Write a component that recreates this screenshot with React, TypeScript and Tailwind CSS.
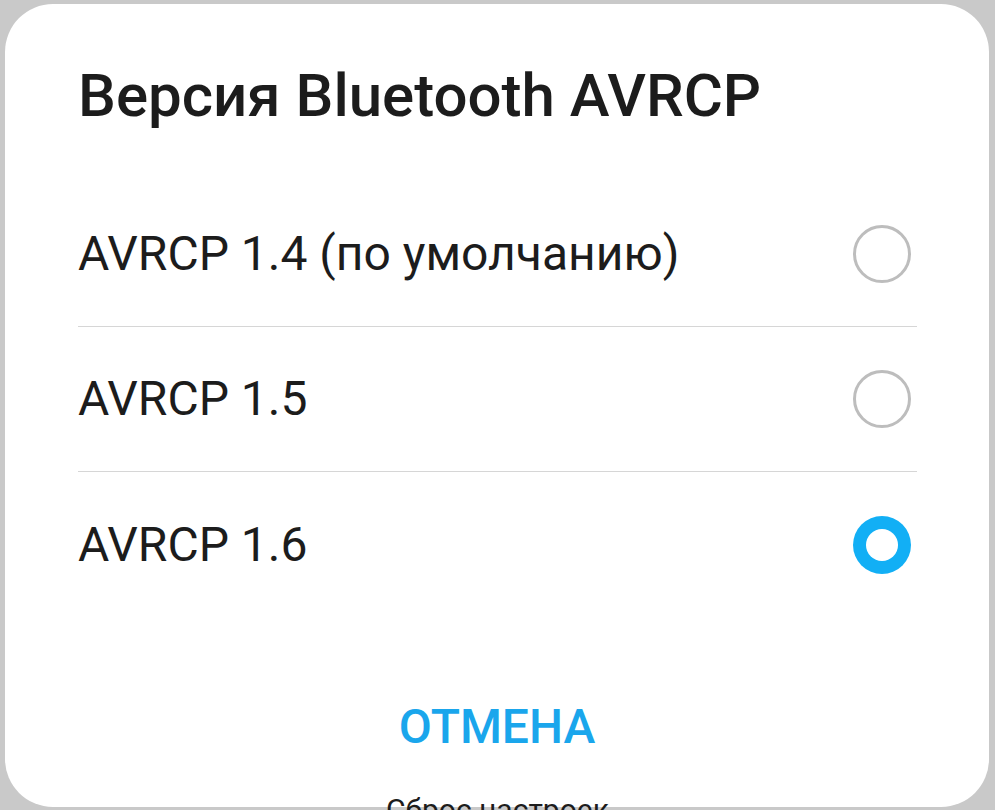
import React from "react";

const items = [
  { label: "AVRCP 1.4 (по умолчанию)", selected: false },
  { label: "AVRCP 1.5", selected: false },
  { label: "AVRCP 1.6", selected: true },
];

function Radio({ selected }: { selected: boolean }) {
  if (selected) {
    return (
      <div className="w-[58px] h-[58px] rounded-full bg-[#12aff5] flex items-center justify-center">
        <div className="w-[32px] h-[32px] rounded-full bg-white" />
      </div>
    );
  }
  return <div className="w-[58px] h-[58px] rounded-full border-[3px] border-[#bdbdbd]" />;
}

export default function App() {
  return (
    <div
      className="relative w-[995px] h-[810px] overflow-hidden bg-[#c9c9c9] pt-[4px] pl-[5px] pr-[6px]"
      style={{ fontFamily: "Roboto, 'Noto Sans', sans-serif" }}
    >
      <div className="h-[803px] bg-white rounded-[48px] flex flex-col">
        <div className="h-[178px] pl-[73px] pt-[62px]">
          <h1 className="text-[60px] leading-none font-medium text-[#1c1c1c]">
            Версия Bluetooth AVRCP
          </h1>
        </div>
        <div className="pl-[73px] pr-[72px]">
          {items.map((it, i) => (
            <div
              key={it.label}
              className={
                "h-[145px] flex items-center justify-between " +
                (i < items.length - 1 ? "border-b border-[#d6d6d6]" : "")
              }
            >
              <span className="text-[48px] leading-none text-[#1c1c1c]">{it.label}</span>
              <div className="mr-[6px]">
                <Radio selected={it.selected} />
              </div>
            </div>
          ))}
        </div>
        <div className="flex-1 flex justify-center pt-[86px]">
          <span className="text-[48px] leading-none font-medium text-[#1aa6ec]">ОТМЕНА</span>
        </div>
      </div>
      <div className="absolute left-0 right-0 top-[795px] flex justify-center">
        <span className="text-[30px] leading-none text-[#1c1c1c]">Сброс настроек</span>
      </div>
    </div>
  );
}
